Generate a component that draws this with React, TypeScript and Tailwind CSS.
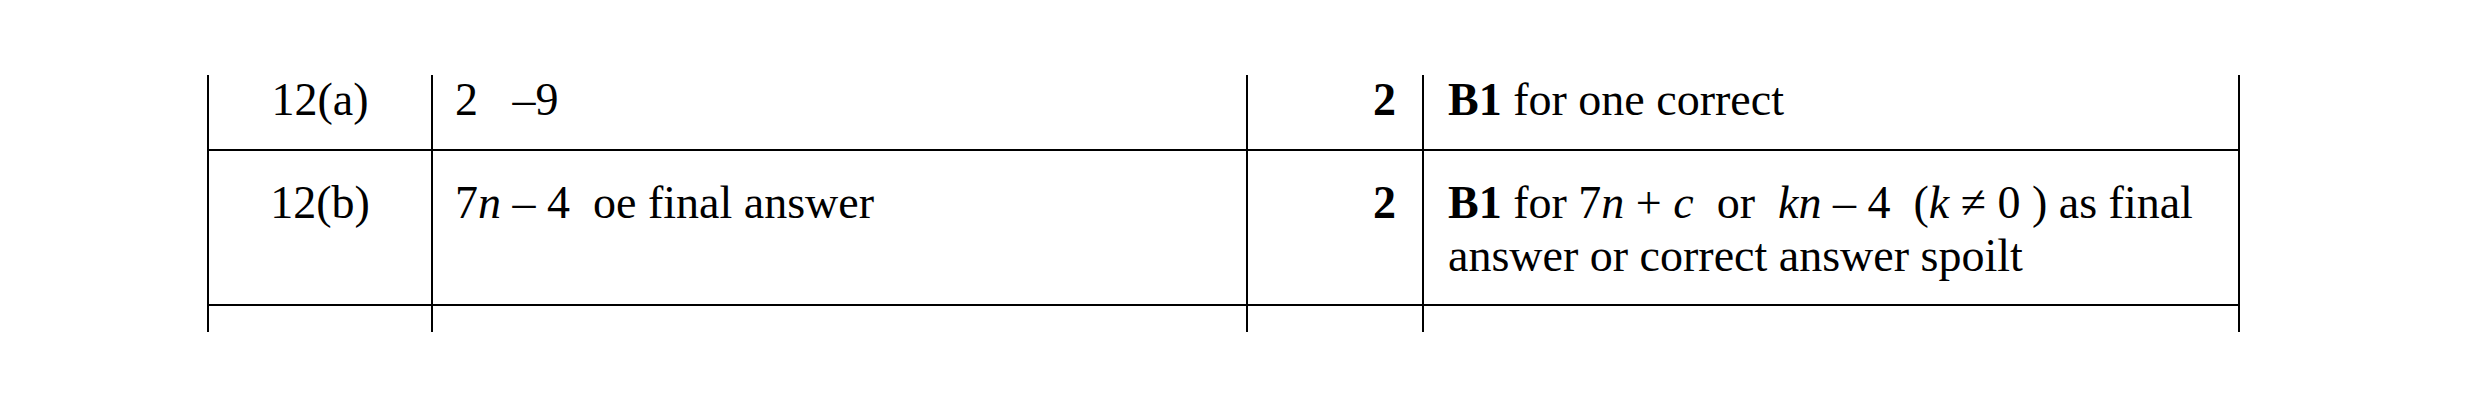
const serif = "font-['Liberation_Serif','Times_New_Roman',serif]";

function Cell({
  width,
  className = '',
  children,
}: {
  width: string;
  className?: string;
  children?: React.ReactNode;
}) {
  return <div className={`${width} shrink-0 h-full border-l-2 border-black ${className}`}>{children}</div>;
}

export default function App() {
  return (
    <div className={`w-[2481px] h-[408px] bg-white text-black text-[46px] ${serif}`}>
      <div className="pt-[75px] pl-[207px]">
        <div className="w-[2033px] border-r-2 border-black">
          {/* 12(a) */}
          <div className="flex h-[76px] border-b-2 border-black leading-[49px]">
            <Cell width="w-[224px]" className="text-center">12(a)</Cell>
            <Cell width="w-[815px]" className="pl-[22px] whitespace-pre">2   –9</Cell>
            <Cell width="w-[176px]" className="text-right pr-[26px] font-bold">2</Cell>
            <Cell width="w-[816px]" className="pl-[24px]">
              <span className="font-bold">B1</span> for one correct
            </Cell>
          </div>

          {/* 12(b) */}
          <div className="flex h-[155px] border-b-2 border-black leading-[53px]">
            <Cell width="w-[224px]" className="text-center pt-[25px]">12(b)</Cell>
            <Cell width="w-[815px]" className="pl-[22px] pt-[25px] whitespace-pre">
              7<i>n</i> – 4  oe final answer
            </Cell>
            <Cell width="w-[176px]" className="text-right pr-[26px] pt-[25px] font-bold">2</Cell>
            <Cell width="w-[816px]" className="pl-[24px] pt-[25px] whitespace-pre">
              <span className="font-bold">B1</span> for 7<i>n</i> + <i>c</i>  or  <i>kn</i> – 4  (<i>k</i> ≠ 0 ) as final
              <br />
              answer or correct answer spoilt
            </Cell>
          </div>

          {/* next row, cut off */}
          <div className="flex h-[26px]">
            <Cell width="w-[224px]" />
            <Cell width="w-[815px]" />
            <Cell width="w-[176px]" />
            <Cell width="w-[816px]" />
          </div>
        </div>
      </div>
    </div>
  );
}
